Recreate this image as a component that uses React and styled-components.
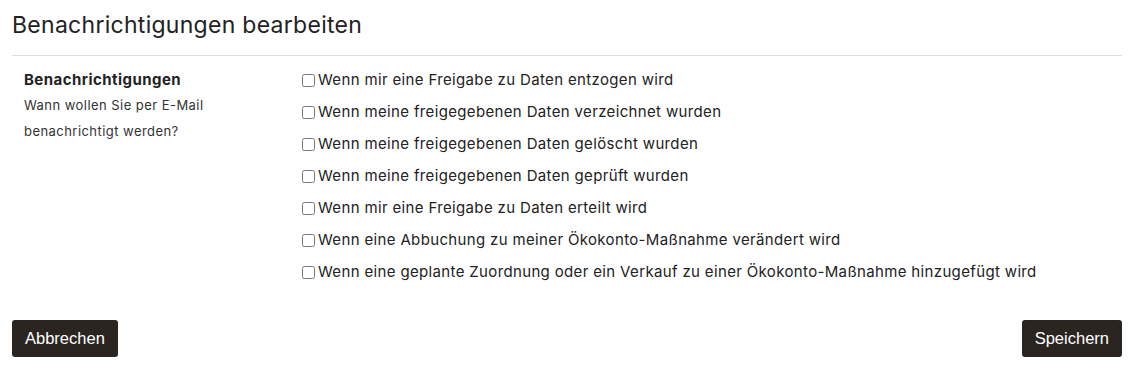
import React, { useState } from "react";
import styled, { createGlobalStyle } from "styled-components";

const GlobalStyle = createGlobalStyle`
  body {
    margin: 0;
    background: #fff;
    font-family: Inter, "Noto Sans", sans-serif;
    color: #222;
  }
`;

const OPTIONS = [
  "Wenn mir eine Freigabe zu Daten entzogen wird",
  "Wenn meine freigegebenen Daten verzeichnet wurden",
  "Wenn meine freigegebenen Daten gelöscht wurden",
  "Wenn meine freigegebenen Daten geprüft wurden",
  "Wenn mir eine Freigabe zu Daten erteilt wird",
  "Wenn eine Abbuchung zu meiner Ökokonto-Maßnahme verändert wird",
  "Wenn eine geplante Zuordnung oder ein Verkauf zu einer Ökokonto-Maßnahme hinzugefügt wird",
];

const App = () => {
  const [checked, setChecked] = useState(OPTIONS.map(() => false));

  const toggle = (i) =>
    setChecked((prev) => prev.map((v, idx) => (idx === i ? !v : v)));

  return (
    <>
      <GlobalStyle />
      <StyledPage>
        <StyledTitle>Benachrichtigungen bearbeiten</StyledTitle>
        <StyledSection>
          <StyledLabel>
            <h4>Benachrichtigungen</h4>
            <p>Wann wollen Sie per E-Mail benachrichtigt werden?</p>
          </StyledLabel>
          <StyledOptions>
            {OPTIONS.map((text, i) => (
              <StyledOption key={text}>
                <input
                  type="checkbox"
                  checked={checked[i]}
                  onChange={() => toggle(i)}
                />
                {text}
              </StyledOption>
            ))}
          </StyledOptions>
        </StyledSection>
        <StyledFooter>
          <StyledButton>Abbrechen</StyledButton>
          <StyledButton>Speichern</StyledButton>
        </StyledFooter>
      </StyledPage>
    </>
  );
};

const StyledPage = styled.div`
  padding: 0 15px 0 12px;
`;

const StyledTitle = styled.h2`
  margin: 0;
  padding: 11px 0 15px;
  font-size: 23px;
  font-weight: 400;
  letter-spacing: 0.28px;
  line-height: 29px;
  color: #222;
  border-bottom: 1px solid #ddd;
`;

const StyledSection = styled.div`
  display: flex;
  padding: 14px 0 0 12px;
`;

const StyledLabel = styled.div`
  width: 278px;
  flex-shrink: 0;
  h4 {
    margin: 0;
    font-size: 15px;
    font-weight: 700;
    letter-spacing: 0.45px;
    line-height: 20px;
    color: #222;
  }
  p {
    margin: 2px 0 0;
    width: 210px;
    font-size: 13px;
    letter-spacing: 0.45px;
    line-height: 26px;
    color: #333;
  }
`;

const StyledOptions = styled.div`
  display: flex;
  flex-direction: column;
  gap: 12px;
`;

const StyledOption = styled.label`
  display: flex;
  align-items: center;
  font-size: 15px;
  letter-spacing: 0.35px;
  line-height: 20px;
  color: #222;
  input {
    margin: 0 3px 0 0;
    width: 13px;
    height: 13px;
  }
`;

const StyledFooter = styled.div`
  display: flex;
  justify-content: space-between;
  margin-top: 38px;
`;

const StyledButton = styled.button`
  background: #2b2522;
  color: #fff;
  border: none;
  border-radius: 3px;
  height: 37px;
  padding: 0 13px;
  font-family: "Liberation Sans", Arial, sans-serif;
  font-size: 16.5px;
  cursor: pointer;
`;

export default App;
